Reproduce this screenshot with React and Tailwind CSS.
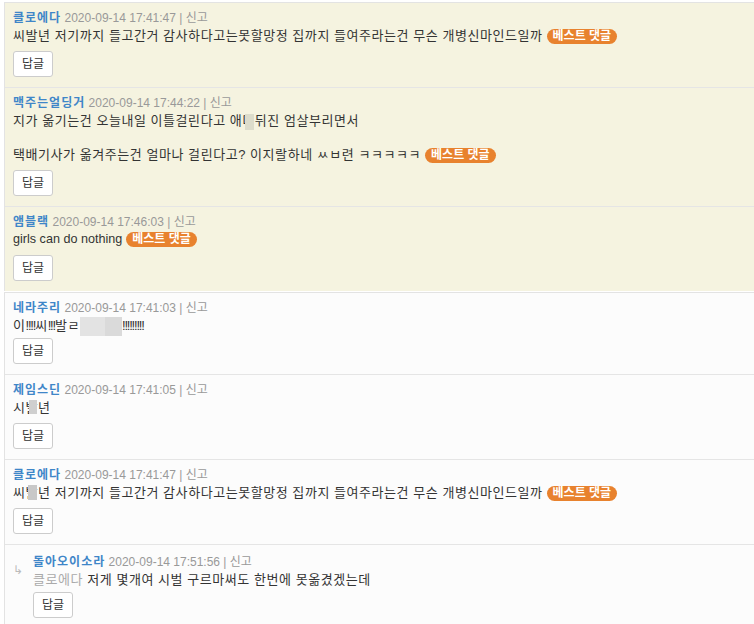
import React from 'react';

const FONT = { fontFamily: '"Liberation Sans", "Noto Sans CJK KR", sans-serif' };

const Badge = () => (
  <span className="inline-block align-middle ml-1 rounded-full bg-[#e8822e] text-white text-[12px] font-bold leading-[15px] px-[6px] tracking-normal">
    베스트 댓글
  </span>
);

// word covered by a grey censor box
const Blur = ({ children, className = '' }) => (
  <span className="relative">
    {children}
    <span className={`absolute ${className}`} />
  </span>
);

const ReplyBtn = ({ tight }) => (
  <button className={`${tight ? 'mt-[4px]' : 'mt-[7px]'} w-10 h-[26px] bg-white border border-[#ccc] rounded-[3px] text-[12px] text-[#333] leading-none`}>
    답글
  </button>
);

const Comment = ({ name, date, children, reply, latin, tight }) => (
  <li className={`border-b border-[#e5e5e5] last:border-b-0 pb-[10px] ${reply ? 'pl-[28px] pt-[9px] relative' : 'pl-2 pt-[7px]'}`}>
    {reply && <span className="absolute left-[8px] top-[16px] text-[12px] text-[#bbb]">↳</span>}
    <div className="leading-[17px] text-[12px]">
      <span className="font-bold text-[#3f86c8] tracking-[1px]">{name}</span>{' '}
      <span className="text-[#999]">{date} | 신고</span>
    </div>
    <div className={`leading-[17px] text-[#333] ${latin ? 'text-[12.6px]' : 'text-[13px] tracking-[0.55px]'}`}>{children}</div>
    <ReplyBtn tight={tight} />
  </li>
);

export default function App() {
  return (
    <div className="pt-[2px] pl-1 bg-white min-h-screen" style={FONT}>
      <ul className="bg-[#f5f3e0] border-t border-l border-[#e3e3e3] mb-[1px]">
        <Comment name="클로에다" date="2020-09-14 17:41:47">
          씨발년 저기까지 들고간거 감사하다고는못할망정 집까지 들여주라는건 무슨 개병신마인드일까<Badge />
        </Comment>
        <Comment name="맥주는얼딩거" date="2020-09-14 17:44:22">
          지가 옮기는건 오늘내일 이틀걸린다고 애<Blur className="left-[3px] top-[1px] w-[9px] h-[16px] bg-[#dcdccb]">미</Blur>뒤진 엄살부리면서
          <br />
          <br />
          택배기사가 옮겨주는건 얼마나 걸린다고? 이지랄하네 ㅆㅂ련 ㅋㅋㅋㅋㅋ<Badge />
        </Comment>
        <Comment latin name="앰블랙" date="2020-09-14 17:46:03">
          girls can do nothing<Badge />
        </Comment>
      </ul>
      <ul className="bg-[#fcfcfc] border-t border-l border-[#e3e3e3]">
        <Comment tight name="네라주리" date="2020-09-14 17:41:03">
          이<span className="tracking-[-1.2px]">!!!!</span>씨<span className="tracking-[-1.2px]">!!!</span>발ㄹ<span className="relative pl-[42px]">
            <span className="absolute left-0 top-[-1px] w-[25px] h-[19px] bg-[#e3e3e3]" />
            <span className="absolute left-[25px] top-[-1px] w-[17px] h-[19px] bg-[#dadada]" />
          </span><span className="tracking-[-1.2px]">!!!!!!!!!</span>
        </Comment>
        <Comment name="제임스딘" date="2020-09-14 17:41:05">
          시<Blur className="left-[3px] top-0 w-[8px] h-[14px] bg-[#cfcfcf]">발</Blur>년
        </Comment>
        <Comment name="클로에다" date="2020-09-14 17:41:47">
          씨<Blur className="left-[2px] top-0 w-[9px] h-[15px] bg-[#c8c8c8]">발</Blur>년 저기까지 들고간거 감사하다고는못할망정 집까지 들여주라는건 무슨 개병신마인드일까<Badge />
        </Comment>
        <Comment reply tight name="돌아오이소라" date="2020-09-14 17:51:56">
          <span className="text-[#aaa]">클로에다</span> 저게 몇개여 시벌 구르마써도 한번에 못옮겼겠는데
        </Comment>
      </ul>
    </div>
  );
}
